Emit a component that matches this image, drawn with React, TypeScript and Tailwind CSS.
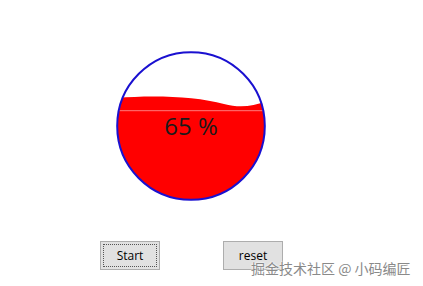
import React from "react";

export default function App() {
  return (
    <div className="relative w-[423px] h-[286px] bg-white overflow-hidden" style={{ fontFamily: '"Open Sans", "Noto Sans", sans-serif' }}>
      <div className="flex flex-col pt-[51px]">
        <div className="ml-[116px] w-[150px] h-[150px]">
          <svg width="150" height="150" viewBox="0 0 150 150">
            <defs>
              <clipPath id="c">
                <circle cx="75" cy="75" r="74" />
              </clipPath>
            </defs>
            <g clipPath="url(#c)">
              <path d="M0 47 C 35 44, 80 45, 108 53 C 124 57.5, 138 55, 150 50.5 L150 150 L0 150 Z" fill="#ff0000" />
              <line x1="0" y1="59.7" x2="150" y2="59.7" stroke="#ff9a9a" strokeWidth="0.8" />
            </g>
            <circle cx="75" cy="75" r="73.8" fill="none" stroke="#1a10d0" strokeWidth="2" />
            <text x="75" y="84" textAnchor="middle" fontSize="24" fill="#1a1a1a" fontFamily='"Open Sans", "Noto Sans", sans-serif'>65 %</text>
          </svg>
        </div>
        <div className="flex mt-[40px] ml-[100px] gap-[63px]">
          <button className="w-[60px] h-[29px] bg-[#e1e1e1] border border-[#adadad] p-[2px] flex">
            <span className="flex-1 border border-dotted border-[#555] flex items-center justify-center text-[12px] text-black">Start</span>
          </button>
          <button className="w-[60px] h-[29px] bg-[#e1e1e1] border border-[#adadad] flex items-center justify-center text-[12px] text-black">
            reset
          </button>
        </div>
      </div>
      <div
        className="absolute left-[251px] top-[258px] text-[14px] text-[#8a8a8a] whitespace-nowrap"
        style={{ fontFamily: '"Noto Sans CJK SC", "Noto Sans", sans-serif', textShadow: "0 0 2px #fff, 0 0 2px #fff" }}
      >
        掘金技术社区 @ 小码编匠
      </div>
    </div>
  );
}
